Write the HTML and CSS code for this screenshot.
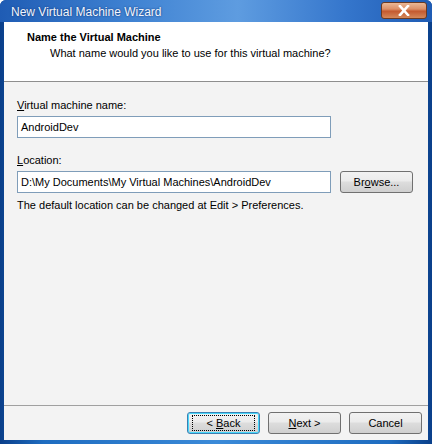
FILE: index.html
```html
<!DOCTYPE html>
<html>
<head>
<meta charset="utf-8">
<link rel="stylesheet" href="styles.css">
</head>
<body>
<div class="window">
  <div class="titlebar">
    <span class="title">New Virtual Machine Wizard</span>
    <span class="close"><svg width="18" height="11" viewBox="0 0 18 11"><path d="M5 1 L13 10 M13 1 L5 10" stroke="#fff" stroke-width="2.6" stroke-linecap="square"/></svg></span>
  </div>
  <div class="client">
    <div class="header">
      <div class="h-title">Name the Virtual Machine</div>
      <div class="h-sub">What name would you like to use for this virtual machine?</div>
    </div>
    <div class="body">
      <div class="label"><u>V</u>irtual machine name:</div>
      <div class="row"><div class="input">AndroidDev</div></div>
      <div class="label loc"><u>L</u>ocation:</div>
      <div class="row">
        <div class="input">D:\My Documents\My Virtual Machines\AndroidDev</div>
        <div class="btn browse">Br<u>o</u>wse...</div>
      </div>
      <div class="hint">The default location can be changed at Edit &gt; Preferences.</div>
    </div>
    <div class="footer">
      <div class="btn back"><span class="focus">&lt; <u>B</u>ack</span></div>
      <div class="btn"><span><u>N</u>ext &gt;</span></div>
      <div class="btn"><span>Cancel</span></div>
    </div>
  </div>
</div>
</body>
</html>
```
FILE: styles.css
```css
html, body { margin: 0; padding: 0; }
body {
  width: 432px; height: 444px; overflow: hidden;
  font-family: "Liberation Sans", Arial, sans-serif; font-size: 11px; color: #000;
}
.window {
  width: 432px; height: 444px; box-sizing: border-box;
  background: linear-gradient(to right, #0a3f8a, #1e6cc0 10%, #3b8ad8 50%, #1e6cc0 90%, #0a3f8a);
  border-radius: 6px 6px 0 0;
  display: flex; flex-direction: column;
  padding: 0 4px 4px 4px;
}
.titlebar {
  height: 22px; display: flex; align-items: center; justify-content: space-between;
  background: linear-gradient(to right, #1f5cb4, #3f82d2 30%, #5e9ce0 55%, #3576cc 80%, #1f5cb4);
  margin: 0 -4px; padding: 0 4px 0 11px;
  border-radius: 6px 6px 0 0;
}
.title { color: #f2f6ff; font-size: 12px; font-family: "Liberation Sans", sans-serif; text-shadow: 0 0 2px #0a2d6a; padding-top: 1px; }
.close {
  width: 44px; height: 15px; margin-right: 1px; margin-top: -2px;
  display: flex; align-items: center; justify-content: center;
  border: 1px solid #6b3a22; border-radius: 3px;
  background: linear-gradient(to bottom, #eab896, #dc9068 40%, #c45a30 55%, #d4885a);
}
.client {
  flex: 1; background: #f3f3f3; display: flex; flex-direction: column;
}
.header {
  background: #fff; height: 51px; border-bottom: 1px solid #8e8e8e;
  padding: 8px 0 0 23px; box-sizing: content-box;
}
.h-title { font-weight: bold; font-size: 11px; line-height: 14px; }
.h-sub { padding-left: 23px; line-height: 14px; margin-top: 2px; }
.body { padding: 16px 0 0 13px; flex: 1; }
.label { line-height: 14px; }
.label.loc { margin-top: 15px; }
.row { display: flex; align-items: center; margin-top: 4px; }
.input {
  width: 306px; height: 20px; box-sizing: content-box;
  border: 1px solid #7f9db9; background: #fff; padding: 0 3px;
  line-height: 20px; white-space: nowrap;
}
.btn {
  width: 71px; height: 20px; box-sizing: content-box;
  border: 1px solid #707070; border-radius: 3px;
  background: linear-gradient(to bottom, #f2f2f2, #ebebeb 45%, #dddddd 50%, #cfcfcf);
  display: flex; align-items: center; justify-content: center;
}
.browse { margin-left: 9px; }
.hint { margin-top: 5px; line-height: 14px; }
.footer {
  border-top: 1px solid #a0a0a0; height: 34px;
  display: flex; justify-content: flex-end; align-items: center;
  gap: 8px; padding-right: 6px; padding-top: 0;
}
.back { border-color: #3c7fb1; box-shadow: inset 0 0 0 1px #48d8fb; }
.focus { outline: 1px dotted #000; outline-offset: 0; padding: 1px 14px; }
```
